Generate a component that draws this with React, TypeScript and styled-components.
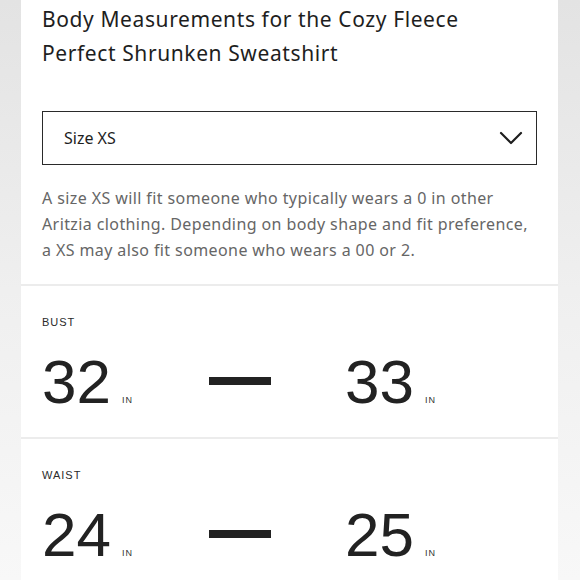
import React from 'react'
import styled, { createGlobalStyle } from 'styled-components'

const GlobalStyle = createGlobalStyle`
  html, body {
    margin: 0;
    padding: 0;
  }
  body {
    width: 580px;
    height: 580px;
    overflow: hidden;
    background: linear-gradient(to bottom, #e3e3e3 0%, #efefef 50%, #f8f8f8 100%);
    font-family: "Noto Sans", "Open Sans", sans-serif;
  }
`

const Card = styled.div`
  width: 537px;
  height: 580px;
  margin-left: 21px;
  background: #ffffff;
  overflow: hidden;
`

const Header = styled.div`
  padding: 2px 21px 0 21px;
`

const Title = styled.h2`
  margin: 0;
  font-size: 21px;
  font-weight: 400;
  line-height: 34px;
  color: #1e1e1e;
  letter-spacing: 0.6px;
`

const Select = styled.div`
  display: flex;
  align-items: center;
  justify-content: space-between;
  box-sizing: border-box;
  height: 54px;
  margin-top: 41px;
  padding: 0 13px 0 21px;
  border: 1.5px solid #2a2a2a;
  font-size: 16px;
  color: #1e1e1e;
`

const Description = styled.p`
  margin: 20px 0 0 0;
  font-size: 16px;
  line-height: 26px;
  color: #666666;
  letter-spacing: 0.4px;
`

const Section = styled.div`
  margin-top: 21px;
`

const Row = styled.div`
  box-sizing: border-box;
  border-top: 2px solid #ececec;
  height: 153px;
  padding: 29px 21px 0 21px;
`

const Label = styled.div`
  font-family: "Liberation Sans", Arial, sans-serif;
  font-size: 11px;
  letter-spacing: 1px;
  color: #2a2a2a;
  line-height: 14px;
`

const Values = styled.div`
  display: flex;
  align-items: center;
  margin-top: 21px;
  height: 64px;
`

const Value = styled.div`
  display: flex;
  align-items: baseline;
  width: 167px;
`

const Number = styled.span`
  font-family: "Liberation Sans", Arial, sans-serif;
  font-size: 62px;
  line-height: 64px;
  color: #222222;
`

const Unit = styled.span`
  font-family: "Liberation Sans", Arial, sans-serif;
  font-size: 9px;
  letter-spacing: 1px;
  color: #333333;
  margin-left: 11px;
`

const Dash = styled.div`
  width: 62px;
  height: 8px;
  background: #222222;
  margin-right: 74px;
  margin-top: -2px;
`

const Chevron = () => (
  <svg width="24" height="14" viewBox="0 0 24 14" fill="none">
    <path d="M2 2 L12 12 L22 2" stroke="#1e1e1e" strokeWidth="2.2" strokeLinecap="round" strokeLinejoin="round" />
  </svg>
)

const measurements = [
  { label: 'BUST', from: 32, to: 33 },
  { label: 'WAIST', from: 24, to: 25 },
]

export default function App() {
  return (
    <>
      <GlobalStyle />
      <Card>
        <Header>
          <Title>
            Body Measurements for the Cozy Fleece
            <br />
            Perfect Shrunken Sweatshirt
          </Title>
          <Select>
            <span>Size XS</span>
            <Chevron />
          </Select>
          <Description>
            A size XS will fit someone who typically wears a 0 in other Aritzia clothing. Depending on body shape
            and fit preference, a XS may also fit someone who wears a 00 or 2.
          </Description>
        </Header>
        <Section>
          {measurements.map(m => (
            <Row key={m.label}>
              <Label>{m.label}</Label>
              <Values>
                <Value>
                  <Number>{m.from}</Number>
                  <Unit>IN</Unit>
                </Value>
                <Dash />
                <Value>
                  <Number>{m.to}</Number>
                  <Unit>IN</Unit>
                </Value>
              </Values>
            </Row>
          ))}
        </Section>
      </Card>
    </>
  )
}
